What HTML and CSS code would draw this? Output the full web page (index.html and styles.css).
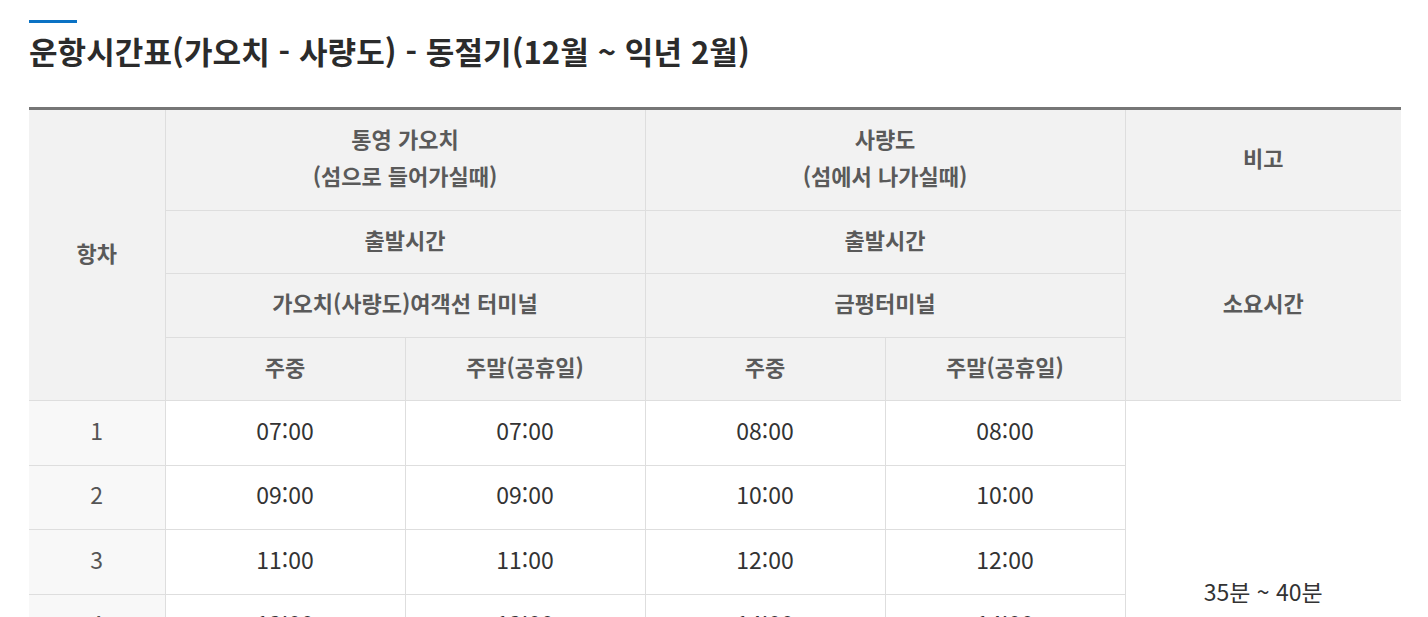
FILE: index.html
```html
<!DOCTYPE html>
<html lang="ko">
<head>
<meta charset="utf-8">
<title>운항시간표</title>
<link rel="stylesheet" href="styles.css">
</head>
<body>
<div class="wrap">
  <div class="bar"></div>
  <h2 class="title">운항시간표(가오치 - 사량도) - 동절기(12월 ~ 익년 2월)</h2>
  <table class="timetable">
    <colgroup>
      <col class="c-no">
      <col class="c-t">
      <col class="c-t">
      <col class="c-t">
      <col class="c-t">
      <col class="c-note">
    </colgroup>
    <thead>
      <tr class="h1">
        <th rowspan="4" class="first">항차</th>
        <th colspan="2">통영 가오치<br>(섬으로 들어가실때)</th>
        <th colspan="2">사량도<br>(섬에서 나가실때)</th>
        <th class="last">비고</th>
      </tr>
      <tr class="h2">
        <th colspan="2">출발시간</th>
        <th colspan="2">출발시간</th>
        <th rowspan="3" class="last">소요시간</th>
      </tr>
      <tr class="h3">
        <th colspan="2">가오치(사량도)여객선 터미널</th>
        <th colspan="2">금평터미널</th>
      </tr>
      <tr class="h4">
        <th>주중</th>
        <th>주말(공휴일)</th>
        <th>주중</th>
        <th>주말(공휴일)</th>
      </tr>
    </thead>
    <tbody>
      <tr>
        <td class="no first">1</td>
        <td>07:00</td><td>07:00</td><td>08:00</td><td>08:00</td>
        <td rowspan="6" class="dur last">35분 ~ 40분</td>
      </tr>
      <tr>
        <td class="no first">2</td>
        <td>09:00</td><td>09:00</td><td>10:00</td><td>10:00</td>
      </tr>
      <tr>
        <td class="no first">3</td>
        <td>11:00</td><td>11:00</td><td>12:00</td><td>12:00</td>
      </tr>
      <tr>
        <td class="no first">4</td>
        <td>13:00</td><td>13:00</td><td>14:00</td><td>14:00</td>
      </tr>
      <tr>
        <td class="no first">5</td>
        <td>15:00</td><td>15:00</td><td>16:00</td><td>16:00</td>
      </tr>
      <tr>
        <td class="no first">6</td>
        <td>16:30</td><td>16:30</td><td>17:00</td><td>17:00</td>
      </tr>
    </tbody>
  </table>
</div>
</body>
</html>
```
FILE: styles.css
```css
html, body {
  margin: 0;
  padding: 0;
  background: #fff;
}
body {
  font-family: "Noto Sans CJK KR", "Noto Sans", sans-serif;
  color: #333;
}
.wrap {
  margin-left: 29px;
  width: 1372px;
  padding-top: 20px;
}
.bar {
  width: 48px;
  height: 3px;
  background: #0a72c4;
}
.title {
  margin: 8px 0 0;
  font-size: 31px;
  line-height: 40px;
  font-weight: 700;
  color: #2b2b2b;
  letter-spacing: 0.1px;
}
.timetable {
  margin-top: 36px;
  width: 100%;
  border-collapse: collapse;
  table-layout: fixed;
  border-top: 3px solid #767676;
}
.c-no { width: 136px; }
.c-t { width: 240px; }
.c-note { width: auto; }
.timetable th,
.timetable td {
  border: 1px solid #dedede;
  text-align: center;
  vertical-align: middle;
  padding: 0 0 6px;
}
.timetable th {
  background: #f2f2f2;
  color: #5a5a5a;
  font-size: 22px;
  font-weight: 700;
  line-height: 37px;
}
.timetable .first { border-left: none; }
.timetable .last { border-right: none; }
.h1 th { height: 94px; }
.h2 th { height: 56px; }
.h3 th { height: 57px; }
.h4 th { height: 56px; }
.timetable td {
  font-size: 23px;
  line-height: 30px;
  height: 57.5px;
  color: #333;
  background: #fff;
}
.timetable td.no {
  background: #f8f8f8;
  color: #555;
}
.timetable td.dur {
  color: #333;
}
```
